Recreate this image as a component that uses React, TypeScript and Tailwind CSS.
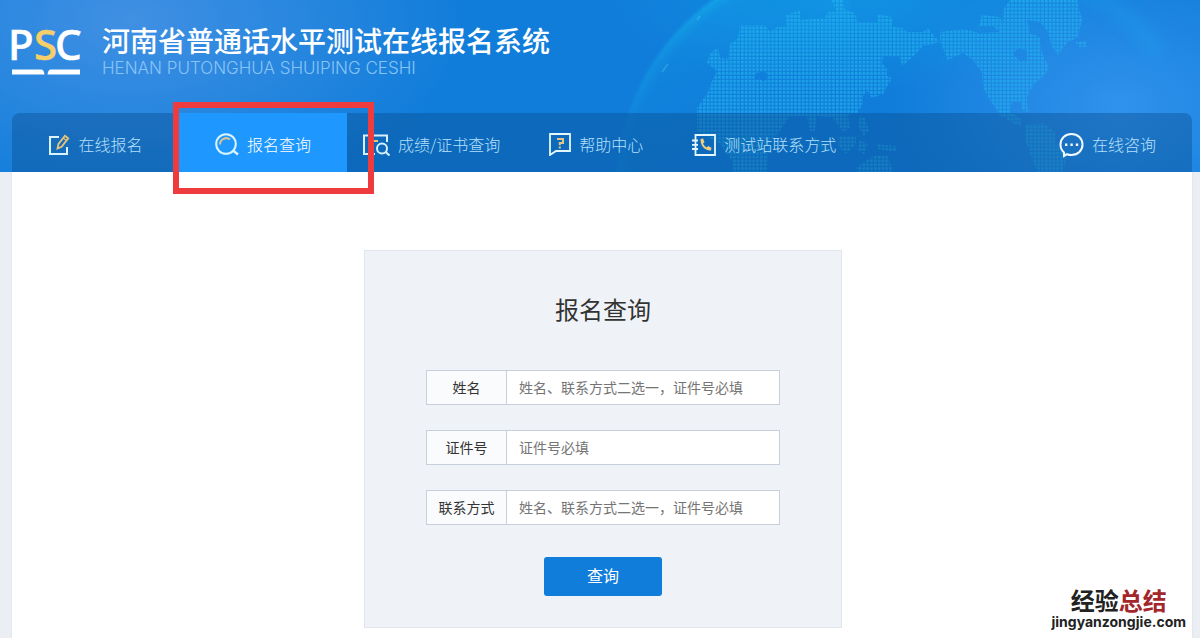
import type { ReactNode } from "react";

const fields = [
  { id: "name", label: "姓名", placeholder: "姓名、联系方式二选一，证件号必填" },
  { id: "idcard", label: "证件号", placeholder: "证件号必填" },
  { id: "contact", label: "联系方式", placeholder: "姓名、联系方式二选一，证件号必填" },
];

function EditIcon() {
  return (
    <svg width="22" height="22" viewBox="0 0 22 22" fill="none" strokeWidth="2">
      <path d="M11 3H2v17h17v-7" stroke="#d6f3ff" />
      <path d="M9.500 14.500l1-4.500L17 1.800l3.200 2.600-6.600 8.300-4.100 1.800z" stroke="#e6c57a" strokeWidth="1.800" />
      <path d="M15.200 4l3.200 2.600" stroke="#e6c57a" strokeWidth="1.200" />
    </svg>
  );
}

function SearchIcon() {
  return (
    <svg width="24" height="24" viewBox="0 0 24 24" fill="none" strokeWidth="2">
      <circle cx="11" cy="11" r="9.800" stroke="#d9f3ff" />
      <path d="M18 17.500l5 4" stroke="#d9f3ff" strokeWidth="2.400" />
      <path d="M5 11.500a6.200 6.200 0 0 1 10-5" stroke="#dcc490" />
    </svg>
  );
}

function ScoreIcon() {
  return (
    <svg width="27" height="22" viewBox="0 0 27 22" fill="none" stroke="#d6f0ff" strokeWidth="2">
      <path d="M12 20H1V1.500h23V8" />
      <path d="M6 7h9" stroke="#e6c57a" />
      <circle cx="19" cy="14.500" r="5" />
      <path d="M22.500 18l4 3.500" />
    </svg>
  );
}

function HelpIcon() {
  return (
    <svg width="22" height="23" viewBox="0 0 22 23" fill="none" strokeWidth="2">
      <path d="M1 21V1h20v17H7l-6 4z" stroke="#e4f7ff" strokeWidth="1.800" />
      <path d="M8 6h6v4h-3.200v2.200M10.800 13.500v2" stroke="#e0c684" />
    </svg>
  );
}

function PhoneIcon() {
  return (
    <svg width="24" height="22" viewBox="0 0 24 22" fill="none" strokeWidth="2">
      <path d="M3.500 1H23v20H3.500z" stroke="#e4f7ff" strokeWidth="1.800" />
      <path d="M0 6.500h6M0 10.800h6M0 15h6" stroke="#e4f7ff" strokeWidth="1.800" />
      <path
        d="M8.500 5l2.600-.4 1.400 3.600-1.500 1.300c.8 1.800 2 3 3.700 3.900l1.500-1.300 3.200 1.700-.4 2.600c-6.200.4-10.700-4.600-10.500-11.400z"
        fill="#f0cf7d"
      />
    </svg>
  );
}

function ChatIcon() {
  return (
    <svg width="25" height="26" viewBox="0 0 25 26" fill="none">
      <path
        d="M5 20.500A10.600 10.600 0 0 1 1.500 12.500C1.500 6.500 6.200 2 12.500 2s11 4.500 11 10.500-4.700 10.500-11 10.500c-2 0-3.200-.3-4.500-.8L5 24z"
        stroke="#f0fbff"
        strokeWidth="2"
      />
      <path d="M6 11.500h2.400v2.400H6zM11.400 11.500h2.400v2.400h-2.400zM16.800 11.500h2.400v2.400h-2.400z" fill="#f0fbff" />
    </svg>
  );
}

function Logo() {
  return (
    <svg
      width="70"
      height="50"
      viewBox="0 0 70 50"
      className="shrink-0 overflow-visible font-['Noto_Sans'] text-[42px] font-medium"
      role="img"
      aria-label="PSC"
    >
      <text x="-4" y="34" fill="#fff" stroke="#fff" strokeWidth="0.500">P</text>
      <text x="22" y="34" fill="#f6cf6b" stroke="#f6cf6b" strokeWidth="0.500">S</text>
      <text x="43" y="34" fill="#fff" stroke="#fff" strokeWidth="0.500">C</text>
      <path d="M0 43.500h29q3 0 3.500 5H0zM68 43.500H39q-3 0-3.500 5H68z" fill="#fff" />
    </svg>
  );
}

function Globe() {
  return (
    <svg
      className="absolute inset-y-0 right-0 h-full w-[600px]"
      viewBox="600 0 600 172"
      fill="none"
      aria-hidden="true"
    >
      <defs>
        <pattern id="dots" width="3.800" height="3.800" patternUnits="userSpaceOnUse">
          <rect width="2.600" height="2.600" fill="#24b8f0" />
        </pattern>
        <radialGradient id="sphere" gradientUnits="userSpaceOnUse" cx="850" cy="190" r="237">
          <stop offset="0.550" stopColor="#15a5ee" stopOpacity="0" />
          <stop offset="0.930" stopColor="#14a3ea" stopOpacity="0.350" />
          <stop offset="0.980" stopColor="#17bdf0" stopOpacity="0.550" />
          <stop offset="1" stopColor="#17bdf0" stopOpacity="0" />
        </radialGradient>
        <linearGradient id="fade" gradientUnits="userSpaceOnUse" x1="740" y1="0" x2="620" y2="130">
          <stop offset="0" stopColor="#fff" />
          <stop offset="0.500" stopColor="#fff" stopOpacity="0.600" />
          <stop offset="1" stopColor="#fff" stopOpacity="0.200" />
        </linearGradient>
        <mask id="left">
          <path d="M600 0h250v172H600z" fill="url(#fade)" />
        </mask>
        <radialGradient
          id="top"
          gradientUnits="userSpaceOnUse"
          cx="0"
          cy="0"
          r="1"
          gradientTransform="translate(860 0) scale(250 90)"
        >
          <stop offset="0" stopColor="#12a4ea" stopOpacity="0.500" />
          <stop offset="1" stopColor="#12a4ea" stopOpacity="0" />
        </radialGradient>
        <filter id="soft" x="-20%" y="-50%" width="140%" height="200%">
          <feGaussianBlur stdDeviation="8" />
        </filter>
      </defs>
      <circle cx="850" cy="190" r="237" fill="url(#sphere)" mask="url(#left)" />
      <path d="M600 0h600v172H600z" fill="url(#top)" />
      <path d="M1050-20q70 15 110 75" stroke="#1fa8f0" strokeWidth="14" opacity="0.300" filter="url(#soft)" />
      <path d="M697 20l3-4M662 72l6-8" stroke="#5fd0f8" strokeWidth="2" opacity="0.300" />
      <g fill="url(#dots)" fillRule="evenodd" opacity="0.650">
        {/* Europe, Asia and Africa */}
        <path d="M740 25h25l5 7 7-5h10l-2-12 15-5v10l25-2 2-6h10l-6-12h12l2 10 10 3 2 9 20 1 1-9 14 3 1 10 10 1 4 4h16l5-4 5 7 7 7-7 2-10 2-6 7-9 8-6 5-2-10h-17l-1 8 5 4v8l5 2-9 16-11 4-5-7-4 5v8l-6 9-9 2 2 13-7 4-10-14-16-2-2 15h-5l-3-15-17 0-10 15-10 10-2 17-1 15h-34l-1-12-12-17-23-13v-23l10-14 5-13 5-10-10-8 3-10 8-5 2 10 8 1 2-15 8-6zM756 73l8-2 5 5-5 5-10-3z" />
        {/* South-east Asia and Australia */}
        <path d="M860 116l5 2 4 12-5 6-6-10zM838 136h18v8l-10 10-8-8zM860 140l8 4-4 10-7-4zM876 144l20 2v6l-18-3zM815 137l14 12-4 3-12-11zM857 172v-5l13-9 5-2h13l5 16z" />
        {/* North America and Greenland */}
        <path d="M1010 0h67l5 20-4 17-11 6-9 12-6-8-4-15-8-10-13-2 3 13 10 4 2 16 7 14-4 8-12 10-6 12 1 15-6-2v-8h-10l-2 10 10 6 2 9-9-4-13-8-10-15-7-12-1-15-9-13-10-7-15 7-3-7-5-11v-10l23-3 17 4 20-1-8-6-14 1 4-12 18 2 3 9 1-18zM1018 48l9 3v9l-6 2-8-8zM1075 41h12v6h-8z" />
        {/* South America */}
        <path d="M1025 125l18-2 12 9v11l12 10-4 19h-26l-7-19-5-13z" />
      </g>
    </svg>
  );
}

function NavItem({ icon, className = "", children }: { icon: ReactNode; className?: string; children: string }) {
  return (
    <a href="#" className={`flex h-full shrink-0 items-center gap-2 pt-1 text-[#b4e0fb] hover:text-white ${className}`}>
      {icon}
      <span className="pb-0.5">{children}</span>
    </a>
  );
}

export default function App() {
  return (
    <div className="relative flex min-h-screen flex-col bg-[#ebeff3] font-['Noto_Sans_CJK_SC',sans-serif]">
      <header className="relative bg-[#107dda] bg-[radial-gradient(ellipse_340px_190px_at_130px_20px,#4090e3,transparent),radial-gradient(ellipse_230px_150px_at_calc(100%_-_80px)_105px,#3092ec,transparent)] pr-2 pl-3">
        <Globe />
        <div className="relative flex h-[113px] items-start gap-5 pt-[26px]">
          <Logo />
          <div>
            <h1 className="text-[28px] leading-7 font-medium text-white">河南省普通话水平测试在线报名系统</h1>
            <p className="mt-1 font-['Inter',sans-serif] text-[17px] leading-5 font-light text-[#8ac4f6]">
              HENAN PUTONGHUA SHUIPING CESHI
            </p>
          </div>
        </div>
        <nav className="relative flex h-[59px] items-center rounded-t-lg bg-[#0a4a8c]/40 text-base font-light">
          <NavItem icon={<EditIcon />} className="w-[167px] justify-center">在线报名</NavItem>
          <div className="relative z-10 h-full">
            <NavItem icon={<SearchIcon />} className="w-[168px] justify-center bg-[#1e98ff] text-white">报名查询</NavItem>
            <div className="pointer-events-none absolute -top-[11px] -left-[6px] h-[92px] w-[201px] border-[6px] border-[#ee3b3e]" />
          </div>
          <div className="flex h-full items-center gap-[49px] pl-4">
            <NavItem icon={<ScoreIcon />}>成绩/证书查询</NavItem>
            <NavItem icon={<HelpIcon />}>帮助中心</NavItem>
            <NavItem icon={<PhoneIcon />}>测试站联系方式</NavItem>
          </div>
          <NavItem icon={<ChatIcon />} className="ml-auto pr-9">在线咨询</NavItem>
        </nav>
      </header>

      <main className="mr-2 ml-3 flex-1 bg-white pt-[78px] pr-4 pb-[10px] pl-[18px] shadow-[0_0_2px_#cfd8e2]">
        <form className="mx-auto max-w-[478px] border border-[#e1e6ee] bg-[#eff3f8] px-[61px] pt-[42px] pb-[31px]">
          <h2 className="text-center text-2xl leading-8 text-[#333]">报名查询</h2>
          <div className="mt-[45px] flex flex-col gap-[25px]">
            {fields.map((field) => (
              <div key={field.id} className="flex h-[35px] border border-[#c8d0dd] bg-white text-sm">
                <label
                  htmlFor={field.id}
                  className="flex w-20 shrink-0 items-center justify-center border-r border-[#c8d0dd] bg-[#fafbfc] pb-0.5 text-[#333]"
                >
                  {field.label}
                </label>
                <input
                  id={field.id}
                  type="text"
                  placeholder={field.placeholder}
                  className="min-w-0 flex-1 px-3 pb-0.5 outline-none placeholder:text-[#757575]"
                />
              </div>
            ))}
          </div>
          <button
            type="submit"
            className="mx-auto mt-8 block h-[39px] w-[118px] rounded-[3px] bg-[#107dda] pb-1 text-base text-white"
          >
            查询
          </button>
        </form>
      </main>

      {/* site mark */}
      <div className="absolute right-3.5 bottom-2 text-center font-bold text-[#222]">
        <p className="text-2xl leading-7">
          经验<span className="text-[#a3262b]">总结</span>
        </p>
        <p className="font-['Inter',sans-serif] text-sm leading-4">jingyanzongjie.com</p>
      </div>
    </div>
  );
}
